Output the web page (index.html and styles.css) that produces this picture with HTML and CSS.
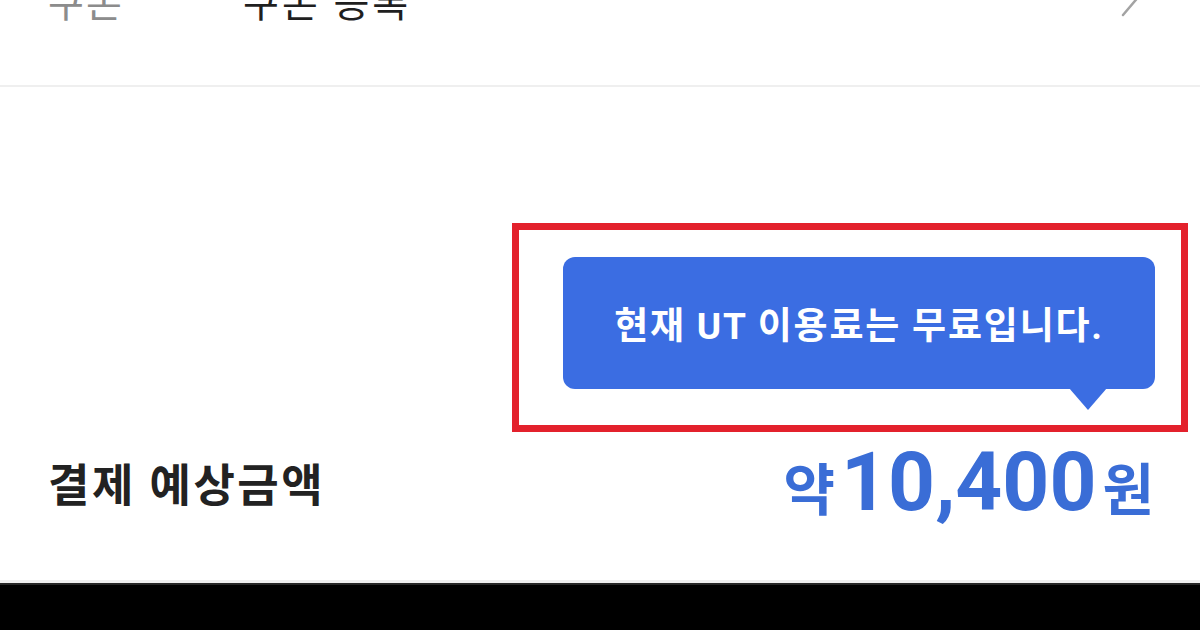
FILE: index.html
```html
<!DOCTYPE html>
<html lang="ko">
<head>
    <meta charset="UTF-8">
    <meta name="viewport" content="width=device-width, initial-scale=1.0">
    <title>결제 예상금액</title>
    <link rel="stylesheet" href="styles.css">
</head>
<body>
    <div class="screen">
        <!-- 쿠폰 행 (위쪽이 잘려 있음) -->
        <div class="coupon-row">
            <span class="row-label">쿠폰</span>
            <span class="row-value">쿠폰 등록</span>
            <svg class="chevron" width="30" height="40" viewBox="0 0 30 40">
                <polyline points="8,-10 25,10 8,30" fill="none" stroke="#a3a3a3" stroke-width="2.5" stroke-linecap="round" stroke-linejoin="round"/>
            </svg>
        </div>
        <hr class="divider">

        <div class="summary">
            <div class="tooltip-wrap">
                <div class="tooltip">현재 UT 이용료는 무료입니다.</div>
            </div>
            <div class="highlight"></div>

            <div class="price-row">
                <span class="price-label">결제 예상금액</span>
                <span class="price">
                    <span class="price-unit">약</span><span class="price-num">10,400</span><span class="price-unit">원</span>
                </span>
            </div>
        </div>

        <div class="bottom-bar"></div>
    </div>
</body>
</html>
```

FILE: styles.css
```css
body{
    margin: 0;
    background: #000;
    font-family: Roboto, "Noto Sans CJK KR", sans-serif;
}
.screen{
    width: 1200px;
    height: 630px;
    overflow: hidden;
    background: #fff;
    display: flex;
    flex-direction: column;
}
.coupon-row{
    display: flex;
    align-items: center;
    height: 70px;
    margin-top: -35px;
    padding: 0 48px;
    font-size: 39px;
    letter-spacing: 2px;
}
.row-label{
    width: 195px;
    color: #8c8c8c;
}
.row-value{
    flex: 1;
    color: #1f1f1f;
    letter-spacing: 3px;
}
.chevron{
    margin-top: 10px;
    margin-right: 7px;
}
.divider{
    margin: 50px 0 0;
    height: 2px;
    border: none;
    background: #efefef;
}
.summary{
    position: relative;
    flex: 1;
}
.tooltip-wrap{
    display: flex;
    justify-content: flex-end;
    padding: 170px 45px 0 0;
}
.tooltip{
    position: relative;
    width: 592px;
    height: 132px;
    border-radius: 12px;
    background: #3b6de2;
    color: #fff;
    font-size: 37px;
    font-weight: bold;
    letter-spacing: 1.8px;
    display: flex;
    align-items: center;
    justify-content: center;
}
.tooltip::after{
    content: "";
    position: absolute;
    right: 48px;
    bottom: -21px;
    border-left: 19px solid transparent;
    border-right: 19px solid transparent;
    border-top: 22px solid #3b6de2;
}
.highlight{
    position: absolute;
    left: 512px;
    top: 136px;
    width: 676px;
    height: 209px;
    box-sizing: border-box;
    border: 7px solid #e3212c;
}
.price-row{
    display: flex;
    align-items: center;
    justify-content: space-between;
    margin-top: 45px;
    padding: 0 46px 0 48px;
}
.price-label{
    font-size: 45px;
    font-weight: bold;
    color: #222;
    letter-spacing: 2.5px;
}
.price{
    color: #3a6dd6;
    font-weight: bold;
    display: flex;
    align-items: baseline;
}
.price-unit{
    font-size: 56px;
}
.price-num{
    font-size: 82px;
    margin: 0 6px;
}
.bottom-bar{
    height: 47px;
    border-top: 3px solid #efefef;
    background: #000;
    box-shadow: inset 0 2px 0 #262626;
}
```
